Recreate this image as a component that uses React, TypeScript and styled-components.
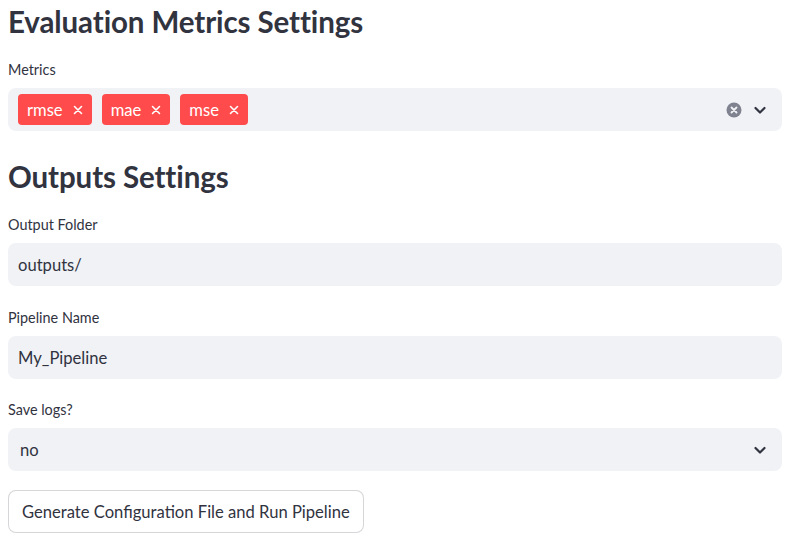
import React from "react";
import styled, { createGlobalStyle } from "styled-components";

const Global = createGlobalStyle`
  html, body { margin: 0; padding: 0; background: #ffffff; }
  body { font-family: "Lato", "Noto Sans", sans-serif; color: #31333f; }
  * { box-sizing: border-box; }
`;

const Page = styled.div`
  width: 774px;
  margin-left: 8px;
  display: flex;
  flex-direction: column;
`;

const Heading = styled.h2<{ $top: number }>`
  margin: ${(p) => p.$top}px 0 0 0;
  padding-top: 2px;
  font-size: 29.5px;
  line-height: 40px;
  font-weight: 700;
  color: #31333f;
  letter-spacing: -0.1px;
`;

const Field = styled.div<{ $top: number }>`
  display: flex;
  flex-direction: column;
  margin-top: ${(p) => p.$top}px;
`;

const Label = styled.label`
  font-size: 14.4px;
  line-height: 21px;
  margin-bottom: 8px;
  color: #31333f;
`;

const Box = styled.div`
  height: 43px;
  background: #f0f2f6;
  border-radius: 8px;
  display: flex;
  align-items: center;
`;

const TextValue = styled.span<{ $pad?: number }>`
  font-size: 16.6px;
  padding-left: ${(p) => p.$pad ?? 10}px;
  color: #31333f;
`;

const Tags = styled.div`
  flex: 1;
  display: flex;
  align-items: center;
  gap: 10px;
  padding-left: 10px;
`;

const Tag = styled.span`
  height: 31px;
  background: #ff4b4b;
  color: #ffffff;
  border-radius: 4px;
  display: inline-flex;
  align-items: center;
  gap: 10px;
  padding: 0 9px 0 9px;
  font-size: 16.6px;
`;

const Icons = styled.div`
  display: flex;
  align-items: center;
  gap: 11px;
  padding-right: 15px;
  margin-left: auto;
`;

const Button = styled.button`
  align-self: flex-start;
  margin-top: 19px;
  height: 43px;
  padding: 0 13px;
  background: #ffffff;
  border: 1px solid rgba(49, 51, 63, 0.2);
  border-radius: 8px;
  font-family: inherit;
  font-size: 16.6px;
  color: #31333f;
`;

const CloseX = () => (
  <svg width="10" height="10" viewBox="0 0 10 10">
    <path d="M1.5 1.5 L8.5 8.5 M8.5 1.5 L1.5 8.5" stroke="#fff" strokeWidth="1.6" strokeLinecap="round" />
  </svg>
);

const ClearIcon = () => (
  <svg width="16" height="16" viewBox="0 0 16 16">
    <circle cx="8" cy="8" r="7.5" fill="#80838f" />
    <path d="M5.5 5.5 L10.5 10.5 M10.5 5.5 L5.5 10.5" stroke="#f0f2f6" strokeWidth="1.8" strokeLinecap="round" />
  </svg>
);

const Chevron = () => (
  <svg width="14" height="14" viewBox="0 0 14 14">
    <path d="M2.5 5 L7 9.5 L11.5 5" stroke="#31333f" strokeWidth="2.2" fill="none" strokeLinecap="round" strokeLinejoin="round" />
  </svg>
);

export default function App() {
  return (
    <>
      <Global />
      <Page>
        <Heading $top={0}>Evaluation Metrics Settings</Heading>
        <Field $top={17}>
          <Label>Metrics</Label>
          <Box>
            <Tags>
              {["rmse", "mae", "mse"].map((t) => (
                <Tag key={t}>
                  {t}
                  <CloseX />
                </Tag>
              ))}
            </Tags>
            <Icons>
              <ClearIcon />
              <Chevron />
            </Icons>
          </Box>
        </Field>
        <Heading $top={24}>Outputs Settings</Heading>
        <Field $top={17}>
          <Label>Output Folder</Label>
          <Box>
            <TextValue>outputs/</TextValue>
          </Box>
        </Field>
        <Field $top={21}>
          <Label>Pipeline Name</Label>
          <Box>
            <TextValue>My_Pipeline</TextValue>
          </Box>
        </Field>
        <Field $top={20}>
          <Label>Save logs?</Label>
          <Box>
            <TextValue $pad={12}>no</TextValue>
            <Icons>
              <Chevron />
            </Icons>
          </Box>
        </Field>
        <Button>Generate Configuration File and Run Pipeline</Button>
      </Page>
    </>
  );
}
